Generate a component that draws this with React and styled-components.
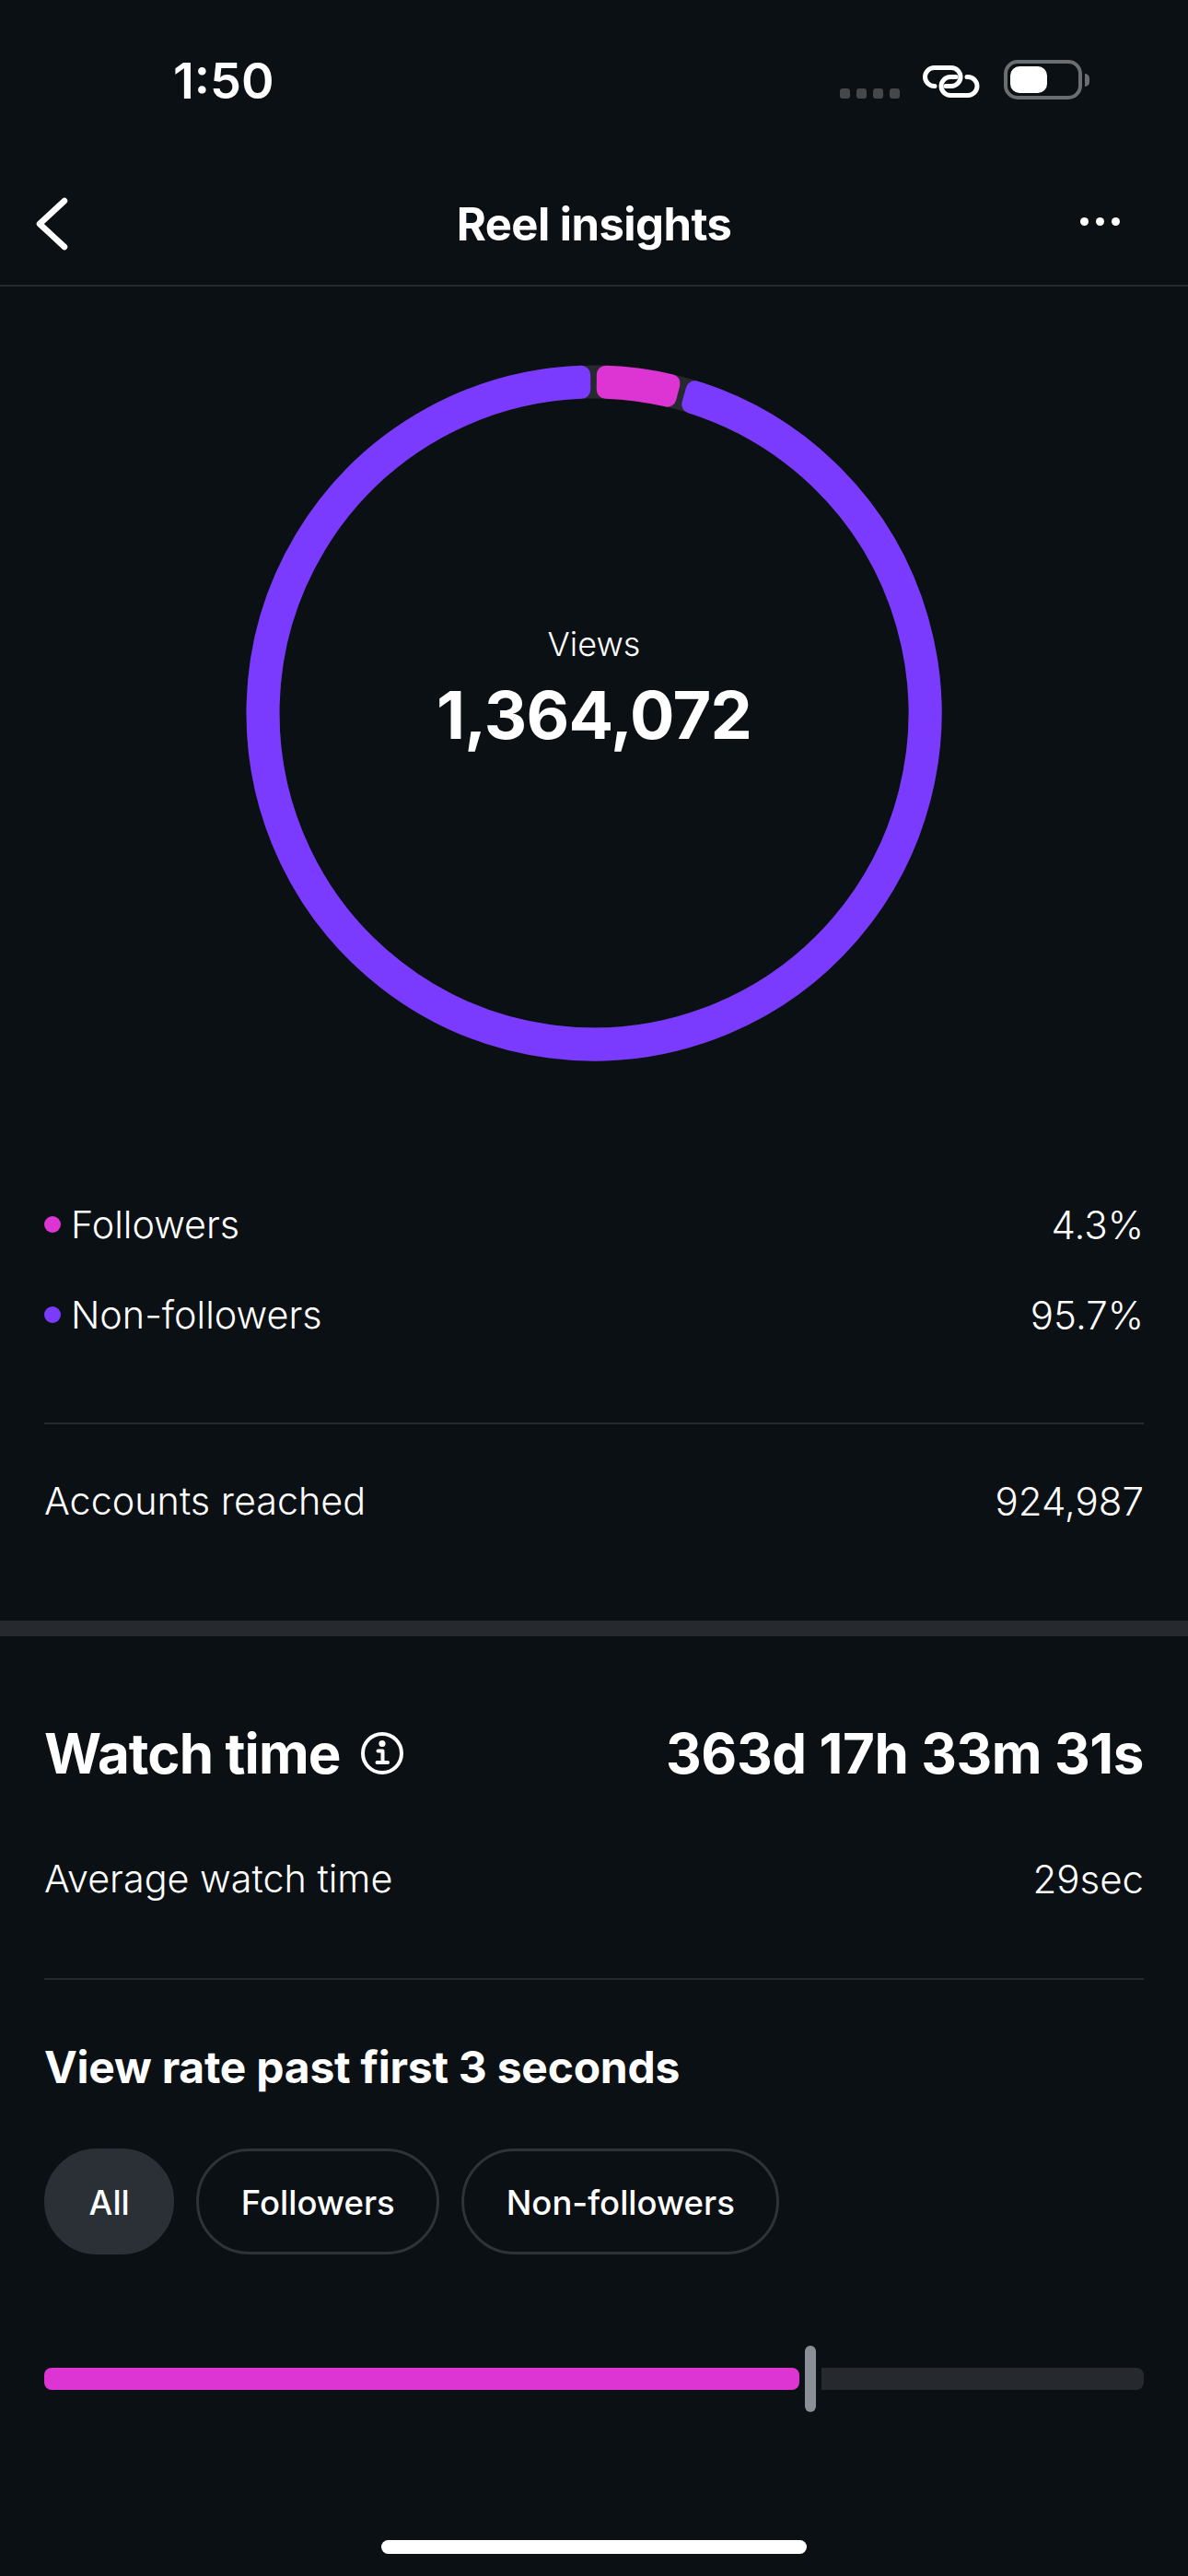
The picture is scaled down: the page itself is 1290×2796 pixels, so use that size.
import React from "react";
import styled, { createGlobalStyle } from "styled-components";

const BG = "#0b1014";
const LINE = "#26292e";
const PINK = "#dd35d3";
const PURPLE = "#7a3bff";

const Global = createGlobalStyle`
  html, body { margin: 0; padding: 0; background: ${BG}; }
  * { box-sizing: border-box; }
`;

const Page = styled.main`
  width: 1290px;
  height: 2796px;
  background: ${BG};
  color: #fff;
  font-family: Inter, "Liberation Sans", sans-serif;
  display: flex;
  flex-direction: column;
  overflow: hidden;
`;

const StatusBar = styled.header`
  height: 176px;
  flex: none;
  padding: 56px 107px 0 188px;
  display: flex;
  justify-content: space-between;
  align-items: flex-start;
`;
const Clock = styled.div`
  font-size: 54px;
  line-height: 64px;
  font-weight: 600;
`;
const StatusIcons = styled.div`
  display: flex;
  align-items: flex-start;
  margin-top: 9px;
  gap: 26px;
`;
const SignalDots = styled.div`
  display: flex;
  gap: 7px;
  margin-top: 31px;
  margin-right: -1px;
`;
const SignalDot = styled.span`
  width: 11px;
  height: 11px;
  border-radius: 3px;
  background: #44484b;
`;
const LinkWrap = styled.div`
  margin-top: 6px;
`;
const Battery = styled.div`
  display: flex;
  align-items: center;
  gap: 3px;
`;
const BatteryBody = styled.div`
  width: 85px;
  height: 43px;
  border: 4px solid #6b6e70;
  border-radius: 15px;
  padding: 3px;
`;
const BatteryFill = styled.div`
  width: 40px;
  height: 29px;
  border-radius: 10px;
  background: #fff;
`;
const BatteryNub = styled.div`
  width: 5px;
  height: 14px;
  background: #6b6e70;
  border-radius: 0 7px 7px 0;
`;

const NavBar = styled.nav`
  height: 135px;
  flex: none;
  padding: 0 37px;
  border-bottom: 2px solid ${LINE};
  display: grid;
  grid-template-columns: 120px 1fr 120px;
  align-items: center;
`;
const NavTitle = styled.h1`
  margin: 2px 0 0;
  text-align: center;
  font-size: 49px;
  line-height: 60px;
  font-weight: 650;
  letter-spacing: -0.55px;
`;
const NavMore = styled.div`
  justify-self: end;
  display: flex;
  gap: 8px;
  margin: 0 37px 4px 0;
`;
const NavDot = styled.span`
  width: 9px;
  height: 9px;
  border-radius: 50%;
  background: #fff;
`;

const RingStage = styled.section`
  margin: 85px auto 0;
  width: 756px;
  height: 756px;
  display: grid;
  flex: none;
  place-items: center;
`;
const RingSvg = styled.svg`
  grid-area: 1 / 1;
  display: block;
`;
const RingCenter = styled.div`
  grid-area: 1 / 1;
  text-align: center;
  margin-bottom: 55px;
`;
const RingLabel = styled.div`
  font-size: 36px;
  line-height: 44px;
  font-weight: 300;
`;
const RingValue = styled.div`
  font-size: 72px;
  line-height: 80px;
  margin-top: 15px;
  font-weight: 700;
  letter-spacing: -0.8px;
`;

const Section = styled.section`
  padding: 0 48px;
  flex: none;
`;
const Legend = styled(Section)`
  margin-top: 128px;
`;
const Row = styled.div`
  display: flex;
  align-items: center;
  justify-content: space-between;
  height: ${(p) => p.$h}px;
  margin-top: ${(p) => p.$mt || 0}px;
  font-size: 41.3px;
  font-weight: 350;
`;
const RowLabel = styled.div`
  display: flex;
  align-items: center;
  gap: 11px;
`;
const RowValue = styled.span`
  font-size: 42px;
`;
const Dot = styled.span`
  width: 18px;
  height: 18px;
  border-radius: 50%;
  background: ${(p) => p.$c};
`;
const Rule = styled.div`
  height: 2px;
  background: ${LINE};
  margin-top: ${(p) => p.$mt}px;
`;
const ThickRule = styled.div`
  height: 17px;
  flex: none;
  background: ${LINE};
  margin-top: 47px;
`;

const WatchHead = styled.div`
  margin-top: 92px;
  display: flex;
  justify-content: space-between;
  align-items: center;
  height: 70px;
  font-size: 60px;
  font-weight: 650;
  letter-spacing: -0.9px;
`;
const WatchLabel = styled.div`
  display: flex;
  align-items: center;
  gap: 22px;
`;
const WatchValue = styled.span`
  letter-spacing: -0.4px;
`;
const SubTitle = styled.h2`
  margin: 65px 0 0;
  font-size: 48px;
  line-height: 60px;
  font-weight: 650;
  letter-spacing: -0.25px;
`;
const Chips = styled.div`
  display: flex;
  gap: 24px;
  margin-top: 58px;
`;
const Chip = styled.div`
  height: 115px;
  padding: 2px 45.5px 0;
  border-radius: 58px;
  display: flex;
  align-items: center;
  font-size: 36.5px;
  font-weight: 500;
  background: ${(p) => (p.$active ? "#2b3036" : "transparent")};
  border: 3px solid ${(p) => (p.$active ? "#2b3036" : "#2f3237")};
`;
const Slider = styled.div`
  margin-top: 99px;
  height: 72px;
  display: flex;
  align-items: center;
`;
const SliderFill = styled.div`
  width: 820px;
  height: 24px;
  background: ${PINK};
  border-radius: 8px;
`;
const SliderThumb = styled.div`
  width: 12px;
  height: 72px;
  margin: 0 6px;
  border-radius: 6px;
  background: #8a8e96;
`;
const SliderRest = styled.div`
  flex: 1;
  height: 24px;
  background: ${LINE};
  border-radius: 0 8px 8px 0;
`;
const HomeBar = styled.div`
  width: 462px;
  height: 15px;
  border-radius: 8px;
  background: #fff;
  margin: 139px auto 0;
  flex: none;
`;

const C = 378, RO = 377.5, RI = 341.5, INSET = 10;
const pt = (r, deg) => {
  const a = (deg * Math.PI) / 180;
  return `${(C + r * Math.sin(a)).toFixed(2)} ${(C - r * Math.cos(a)).toFixed(2)}`;
};
function sector(a0, a1) {
  const ro = RO - INSET, ri = RI + INSET;
  const dO = (INSET / ro) * (180 / Math.PI), dI = (INSET / ri) * (180 / Math.PI);
  const large = a1 - a0 > 180 ? 1 : 0;
  return `M${pt(ro, a0 + dO)} A${ro} ${ro} 0 ${large} 1 ${pt(ro, a1 - dO)} L${pt(ri, a1 - dI)} A${ri} ${ri} 0 ${large} 0 ${pt(ri, a0 + dI)} Z`;
}

const Seg = ({ a0, a1, c }) => (
  <path d={sector(a0, a1)} fill={c} stroke={c} strokeWidth={INSET * 2} strokeLinejoin="round" />
);

const Ring = () => (
  <RingSvg width="756" height="756" viewBox="0 0 756 756">
    <circle cx={C} cy={C} r={(RO + RI) / 2} fill="none" stroke={LINE} strokeWidth={RO - RI} />
    <Seg a0={0.45} a1={14.7} c={PINK} />
    <Seg a0={15.8} a1={359.4} c={PURPLE} />
  </RingSvg>
);

const LinkIcon = () => (
  <svg width="62" height="36" viewBox="0 0 62 36" fill="none" stroke="#fff" strokeWidth="5" strokeLinecap="round">
    <path d="M13 22.5H12.5a10 10 0 0 1 0-20H31a10 10 0 0 1 0 20H25" />
    <path d="M48 12.5H49a10 10 0 0 1 0 20H30a10 10 0 0 1 0-20H36" />
  </svg>
);

const BackIcon = () => (
  <svg width="44" height="66" viewBox="0 0 44 66" fill="none" stroke="#fff" strokeWidth="6.5" strokeLinecap="round" strokeLinejoin="round" style={{ display: "block" }}>
    <path d="M33 8 6 33 33 58" />
  </svg>
);

const InfoIcon = () => (
  <svg width="46" height="46" viewBox="0 0 46 46" fill="none" stroke="#fff" strokeWidth="4" strokeLinecap="round" strokeLinejoin="round">
    <circle cx="23" cy="23" r="21" />
    <path d="M18.5 20.5H23.5V33M17.5 33H29" />
    <circle cx="23" cy="12.5" r="1.6" fill="#fff" />
  </svg>
);

export default function App() {
  return (
    <Page>
      <Global />
      <StatusBar>
        <Clock>1:50</Clock>
        <StatusIcons>
          <SignalDots>
            <SignalDot /><SignalDot /><SignalDot /><SignalDot />
          </SignalDots>
          <LinkWrap><LinkIcon /></LinkWrap>
          <Battery>
            <BatteryBody><BatteryFill /></BatteryBody>
            <BatteryNub />
          </Battery>
        </StatusIcons>
      </StatusBar>
      <NavBar>
        <BackIcon />
        <NavTitle>Reel insights</NavTitle>
        <NavMore><NavDot /><NavDot /><NavDot /></NavMore>
      </NavBar>
      <RingStage>
        <Ring />
        <RingCenter>
          <RingLabel>Views</RingLabel>
          <RingValue>1,364,072</RingValue>
        </RingCenter>
      </RingStage>
      <Legend>
        <Row $h={98}>
          <RowLabel><Dot $c={PINK} />Followers</RowLabel>
          <RowValue>4.3%</RowValue>
        </Row>
        <Row $h={98}>
          <RowLabel><Dot $c={PURPLE} />Non-followers</RowLabel>
          <RowValue>95.7%</RowValue>
        </Row>
        <Rule $mt={68} />
        <Row $h={166}>
          <span>Accounts reached</span>
          <RowValue>924,987</RowValue>
        </Row>
      </Legend>
      <ThickRule />
      <Section>
        <WatchHead>
          <WatchLabel>Watch time <InfoIcon /></WatchLabel>
          <WatchValue>363d 17h 33m 31s</WatchValue>
        </WatchHead>
        <Row $h={116} $mt={43}>
          <span>Average watch time</span>
          <RowValue>29sec</RowValue>
        </Row>
        <Rule $mt={50} />
        <SubTitle>View rate past first 3 seconds</SubTitle>
        <Chips>
          <Chip $active>All</Chip>
          <Chip>Followers</Chip>
          <Chip>Non-followers</Chip>
        </Chips>
        <Slider>
          <SliderFill />
          <SliderThumb />
          <SliderRest />
        </Slider>
      </Section>
      <HomeBar />
    </Page>
  );
}
